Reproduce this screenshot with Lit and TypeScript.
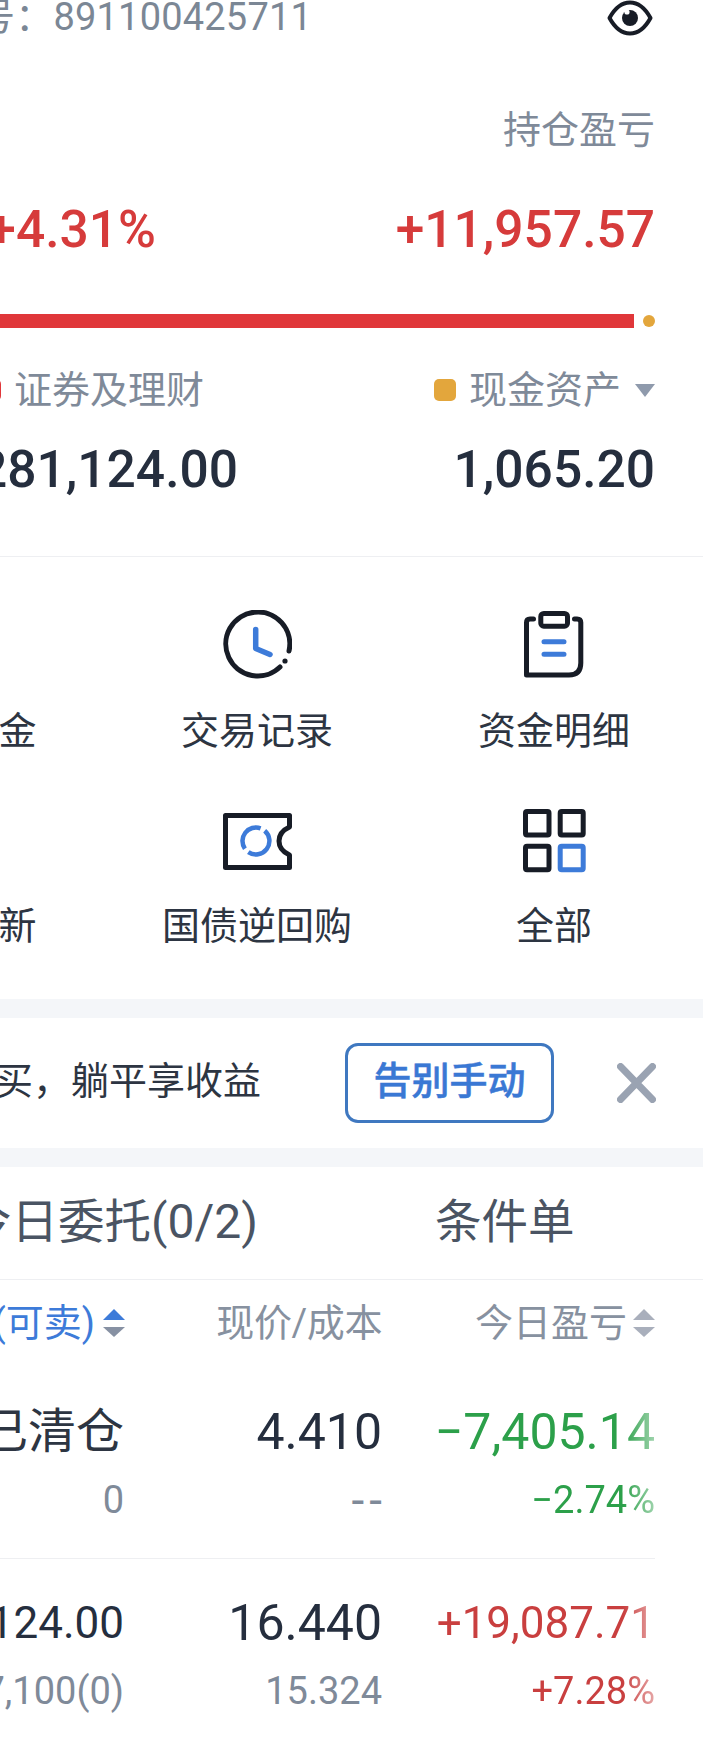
import { LitElement, html, css, svg } from "lit";
import { customElement } from "lit/decorators.js";

const sortIcon = (active: boolean) => html`<svg class="sort" viewBox="0 0 22 28" aria-hidden="true">
  <path d="M11 0 22 11H0Z" fill=${active ? "#3d7bd9" : "#a9afbc"}></path>
  <path d="M0 18H22L11 28Z" fill=${active ? "#8791a3" : "#a9afbc"}></path>
</svg>`;

const clock = svg`<svg class="icon" width="69" height="69" viewBox="0 0 69 69" fill="none" stroke-width="5" stroke-linecap="round" stroke-linejoin="round">
  <path d="M66 41A32 32 0 1 0 57 57" stroke="#171c26"></path>
  <circle cx="62" cy="51" r="2.6" fill="#171c26"></circle>
  <path d="M32.7 19.5V38.5L47 44.5" stroke="#3d7bd9" stroke-width="5.5"></path>
</svg>`;

const clipboard = svg`<svg class="icon" width="60" height="67" viewBox="0 0 60 67" fill="none" stroke-width="5" stroke-linecap="round" stroke-linejoin="round">
  <rect x="16.8" y="2.5" width="26.7" height="12.7" rx="3" stroke="#171c26"></rect>
  <path d="M9.5 8H6Q2.5 8 2.5 11.5V64H45Q56.8 64 56.8 52V11.5Q56.8 8 53 8H50.5" stroke="#171c26"></path>
  <path d="M20 30.7H40M20 43.3H40" stroke="#3d7bd9"></path>
</svg>`;

const coupon = svg`<svg class="icon" width="69" height="57" viewBox="0 0 69 57" fill="none" stroke-width="5" stroke-linejoin="round">
  <path d="M2.5 2.5H66.5V14C60 17 56 22 56 28C56 34 60 39 66.5 42V54.5H2.5Z" stroke="#171c26"></path>
  <path d="M37.6 15.3A13.5 13.5 0 0 0 21.9 35.7M25.3 39.1A13.5 13.5 0 0 0 41.7 17.7" stroke="#3d7bd9" stroke-width="4.5"></path>
</svg>`;

const grid = svg`<svg class="icon" width="63" height="64" viewBox="0 0 63 64" fill="none" stroke-width="5" stroke-linejoin="round">
  <rect x="2.5" y="2.5" width="23.5" height="23.5" rx="1.5" stroke="#171c26"></rect>
  <rect x="37.2" y="2.5" width="23" height="23.5" rx="1.5" stroke="#171c26"></rect>
  <rect x="2.5" y="37.2" width="23.5" height="23.5" rx="1.5" stroke="#171c26"></rect>
  <rect x="37.2" y="37.2" width="23" height="23.5" rx="1.5" stroke="#3d7bd9"></rect>
</svg>`;

const eye = html`<svg class="eye" width="46" height="36" viewBox="0 0 46 36" fill="none">
  <path d="M2.5 18C8 8 15 2.5 23 2.5S38 8 43.5 18C38 28 31 33.5 23 33.5S8 28 2.5 18Z" stroke="#171c26" stroke-width="4" stroke-linejoin="round"></path>
  <circle cx="23" cy="18" r="8" fill="#171c26"></circle>
  <circle cx="20" cy="12" r="2.6" fill="#fff"></circle>
</svg>`;

const close = html`<svg class="close" width="39" height="40" viewBox="0 0 39 40" fill="none">
  <path d="M3.5 3.5 35.5 36.5M35.5 3.5 3.5 36.5" stroke="#9aa3b2" stroke-width="7" stroke-linecap="round"></path>
</svg>`;

@customElement("app-root")
export class AppRoot extends LitElement {
  static styles = css`
    :host {
      display: block;
      width: 703px;
      height: 1745px;
      overflow: hidden;
      background: #fff;
      font-family: Roboto, "Noto Sans CJK SC", sans-serif;
      color: #2d3542;
      font-size: 38px;
    }
    .end { display: flex; justify-content: flex-end; white-space: nowrap; }

    .summary { padding-right: 48px; height: 556px; display: flex; flex-direction: column; }
    .account { display: flex; justify-content: space-between; align-items: center; height: 36px; color: #7b8795; }
    .account .no { margin-left: -23px; margin-top: -2px; white-space: nowrap; line-height: 36px; letter-spacing: 0.2px; }
    .eye { margin-right: 2px; }
    .pnl-label { margin-top: 70px; height: 48px; line-height: 48px; color: #7f8a99; }
    .pnl-values { margin-top: 46px; display: flex; justify-content: space-between; height: 60px; line-height: 60px; font-size: 51.5px; font-weight: 500; color: #d63b3b; }
    .pnl-values .pct { width: 156px; }
    .bar { margin-top: 54px; display: flex; align-items: center; gap: 9px; height: 14px; }
    .bar .fill { flex: 1; height: 14px; background: #e0373a; }
    .bar .rest { width: 12px; height: 12px; border-radius: 50%; background: #e3a63c; }
    .legend { margin-top: 38px; display: flex; justify-content: space-between; height: 48px; line-height: 48px; color: #7f8a99; }
    .legend .item { display: flex; align-items: center; gap: 13px; }
    .legend .item.first { margin-left: -21px; }
    .swatch { width: 22px; height: 22px; border-radius: 5px; }
    .swatch.red { background: #e0373a; }
    .swatch.gold { background: #e3a63c; }
    .caret { width: 0; height: 0; border-left: 10px solid transparent; border-right: 10px solid transparent; border-top: 13px solid #8f9aac; margin-left: 1px; }
    .amounts { margin-top: 26px; display: flex; justify-content: space-between; height: 60px; line-height: 60px; font-size: 51.5px; font-weight: 500; color: #252e3e; }
    .amounts .held { width: 238px; }

    .menu { border-top: 1px solid #eeeff2; display: grid; grid-template-columns: 108.5px 297px 297px; row-gap: 49px; padding: 51px 0 48px; }
    .cell { display: flex; flex-direction: column; align-items: center; }
    .cell.cut { align-items: flex-end; padding-right: 72px; }
    .icon-box { height: 72px; display: flex; align-items: center; justify-content: center; }
    .cell .label { margin-top: 26px; height: 50px; line-height: 50px; color: #2d3542; white-space: nowrap; }
    .cell.low .label { margin-top: 24px; }

    .band { height: 19px; background: #f4f6f9; }
    .banner { height: 130px; display: flex; align-items: center; }
    .banner .text { margin-left: -5px; width: 350px; white-space: nowrap; color: #2d3542; padding-bottom: 11px; }
    .cta { width: 209px; height: 80px; box-sizing: border-box; padding-bottom: 12px; border: 3px solid #3f78c0; border-radius: 13px; color: #3a78d4; font-weight: 500; -webkit-text-stroke: 0.5px #3a78d4; display: flex; align-items: center; justify-content: center; }
    .banner .close { margin-left: 63px; }

    .tabs { height: 112px; box-sizing: content-box; border-bottom: 1px solid #eeeff2; display: flex; align-items: center; color: #4a5463; font-size: 46.5px; }
    .tabs > div { padding-bottom: 11px; }
    .tabs .today { margin-left: -35px; width: 470px; white-space: nowrap; }
    .tabs .latin { font-size: 48px; }

    .thead, .row { display: grid; grid-template-columns: 124px 258px 273px; }
    .thead { height: 86px; align-items: center; color: #8791a0; }
    .th { display: flex; justify-content: flex-end; align-items: center; white-space: nowrap; }
    .th .tx { padding-bottom: 7px; }
    .th .tight { letter-spacing: -0.4px; }
    .th.blue { color: #3d7bd9; margin-right: -1px; }
    .sort { width: 22px; height: 28px; flex: none; margin-left: 6px; }
    .th.blue .sort { margin-left: 8px; }

    .rows { width: 655px; }
    .row { padding: 36px 0 36px; row-gap: 16px; border-bottom: 1px solid #eeeff2; }
    .row:last-child { border-bottom: none; padding-top: 34px; }
    .row > div { display: flex; justify-content: flex-end; white-space: nowrap; }
    .big { height: 60px; line-height: 60px; font-size: 50px; color: #252e3e; }
    .small { height: 44px; line-height: 44px; font-size: 38px; color: #7f8a99; }
    .cjk { font-size: 48px; color: #2d3542; }
    .up, .down { -webkit-mask-image: linear-gradient(to right, #000 calc(100% - 32px), rgba(0, 0, 0, 0.45)); mask-image: linear-gradient(to right, #000 calc(100% - 32px), rgba(0, 0, 0, 0.45)); }
    .up { color: #c93f3f; }
    .down { color: #2ca04a; }
    .fit { font-size: 44px; }
    .dashes { font-size: 46px; letter-spacing: 5px; margin-right: -5px; }
  `;

  render() {
    return html`
      <section class="summary">
        <div class="account"><span class="no">号：891100425711</span>${eye}</div>
        <div class="end pnl-label">持仓盈亏</div>
        <div class="pnl-values"><div class="end pct">+4.31%</div><div>+11,957.57</div></div>
        <div class="bar"><div class="fill"></div><div class="rest"></div></div>
        <div class="legend">
          <div class="item first"><span class="swatch red"></span><span>证券及理财</span></div>
          <div class="item"><span class="swatch gold"></span><span>现金资产</span><span class="caret"></span></div>
        </div>
        <div class="amounts"><div class="end held">281,124.00</div><div>1,065.20</div></div>
      </section>

      <section class="menu">
        <div class="cell cut"><div class="icon-box"></div><div class="label">金</div></div>
        <div class="cell"><div class="icon-box">${clock}</div><div class="label">交易记录</div></div>
        <div class="cell"><div class="icon-box">${clipboard}</div><div class="label">资金明细</div></div>
        <div class="cell cut low"><div class="icon-box"></div><div class="label">新</div></div>
        <div class="cell low"><div class="icon-box">${coupon}</div><div class="label">国债逆回购</div></div>
        <div class="cell low"><div class="icon-box">${grid}</div><div class="label">全部</div></div>
      </section>

      <div class="band"></div>
      <section class="banner">
        <div class="text">买，躺平享收益</div>
        <div class="cta">告别手动</div>
        ${close}
      </section>
      <div class="band"></div>

      <section class="tabs"><div class="today">今日委托<span class="latin">(0/2)</span></div><div>条件单</div></section>

      <section class="thead">
        <div class="th blue"><span class="tx">(可卖)</span>${sortIcon(true)}</div>
        <div class="th"><span class="tx tight">现价/成本</span></div>
        <div class="th"><span class="tx">今日盈亏</span>${sortIcon(false)}</div>
      </section>

      <section class="rows">
        <div class="row">
          <div class="big cjk">已清仓</div><div class="big">4.410</div><div class="big down">−7,405.14</div>
          <div class="small">0</div><div class="small"><span class="dashes">--</span></div><div class="small down">−2.74%</div>
        </div>
        <div class="row">
          <div class="big fit">124.00</div><div class="big">16.440</div><div class="big up fit">+19,087.71</div>
          <div class="small">7,100(0)</div><div class="small">15.324</div><div class="small up">+7.28%</div>
        </div>
      </section>
    `;
  }
}
